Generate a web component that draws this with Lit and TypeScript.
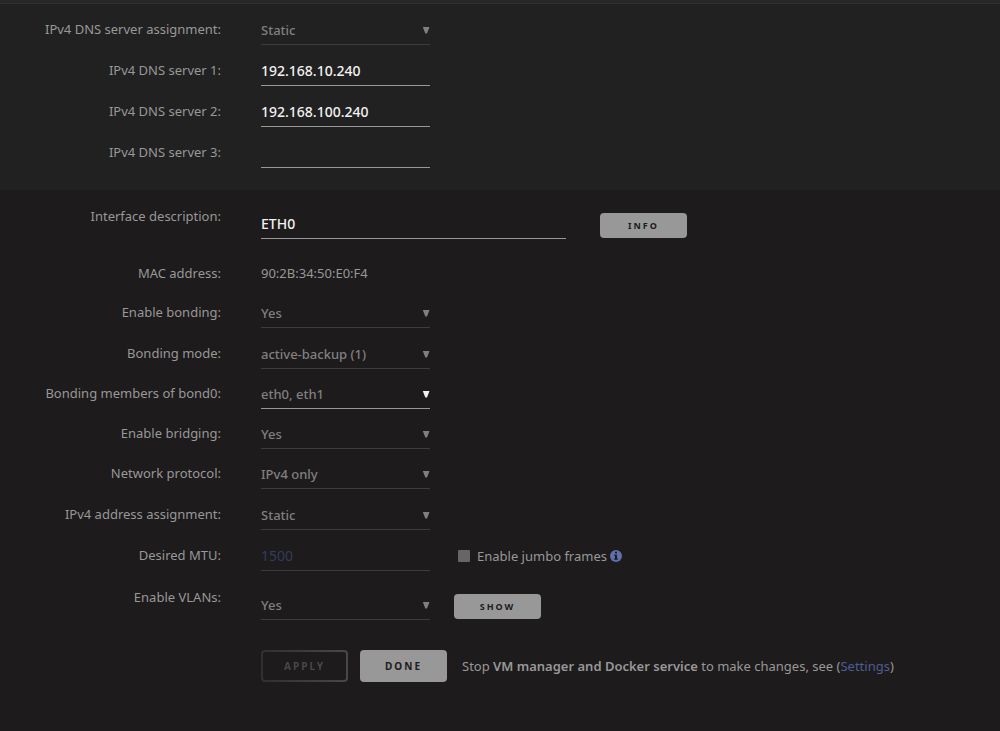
import { LitElement, html, css, svg, nothing } from "lit";
import { customElement } from "lit/decorators.js";

@customElement("app-root")
export class AppRoot extends LitElement {
  static styles = css`
    :host {
      display: flex;
      flex-direction: column;
      min-height: 100vh;
      background: #1d1b1c;
      color: #989898;
      font: 13px/20px "Noto Sans", sans-serif;
    }
    * {
      box-sizing: border-box;
    }
    .strip {
      height: 4px;
      background: #272727;
      border-bottom: 1px solid #303030;
    }
    .dns {
      background: #212121;
      padding-bottom: 22px;
    }
    .row {
      display: grid;
      grid-template-columns: 221px minmax(0, 1fr);
      column-gap: 40px;
      align-items: end;
      height: 41px;
    }
    .snug {
      height: 40px;
    }
    .tall {
      height: 49px;
    }
    .text {
      height: 48px;
    }
    .label {
      text-align: right;
      padding-bottom: 6px;
    }
    .tall .label {
      padding-bottom: 13px;
    }
    .text .label,
    .text .fields {
      padding-bottom: 4px;
    }
    .fields {
      display: flex;
      align-items: flex-end;
    }
    .pick {
      display: grid;
      width: 169px;
      align-items: center;
      border-bottom: 1px solid #3c3c3c;
    }
    .pick select,
    .pick svg {
      grid-area: 1 / 1;
    }
    .pick svg {
      justify-self: end;
      pointer-events: none;
      fill: #808080;
    }
    .open {
      border-color: #989898;
    }
    .open svg {
      fill: #f0f0f0;
    }
    select,
    input {
      font: inherit;
      border-radius: 0;
      outline: none;
      background: transparent;
    }
    select {
      appearance: none;
      width: 100%;
      height: 28px;
      padding: 0 0 1px;
      border: 0;
      color: #808080;
      font-weight: 500;
    }
    .box {
      width: 169px;
      height: 29px;
      padding: 0 0 2px;
      border: 0;
      border-bottom: 1px solid #989898;
      color: #f2f2f2;
      font-size: 14px;
      font-weight: 500;
    }
    .wide {
      width: 305px;
    }
    .dim {
      border-color: #3c3c3c;
    }
    .box::placeholder {
      color: #333c5c;
      opacity: 1;
      font-weight: 400;
    }
    button {
      height: 25px;
      width: 87px;
      margin: 0 0 1px 24px;
      padding: 0;
      border: 0;
      border-radius: 4px;
      background: #989898;
      color: #1d1b1c;
      font: 700 9px/12px "Noto Sans", sans-serif;
      letter-spacing: 2px;
    }
    .wide + button {
      margin-left: 34px;
    }
    .jumbo {
      display: flex;
      align-items: center;
      margin-left: 28px;
      padding-bottom: 5px;
    }
    .jumbo input {
      appearance: none;
      width: 12px;
      height: 12px;
      margin: 0 7px 0 0;
      border-radius: 1px;
      background: #666666;
    }
    .jumbo svg {
      margin-left: 3px;
    }
    .actions {
      display: flex;
      align-items: center;
      flex-wrap: wrap;
      margin: 30px 0 0 261px;
    }
    .actions button {
      height: 32px;
      margin: 0 15px 0 0;
      font-size: 10px;
    }
    .actions .apply {
      margin-right: 12px;
      border: 2px solid transparent;
      color: #484848;
      background:
        linear-gradient(#1d1b1c, #1d1b1c) padding-box,
        linear-gradient(90deg, #303030, #484848) border-box;
    }
    b {
      font-weight: 600;
    }
    a {
      color: #4f5d94;
      text-decoration: none;
    }
  `;

  private pick(id: string, value: string, open = false) {
    return html`<div class="pick ${open ? "open" : ""}">
      <select id=${id}>
        <option>${value}</option>
      </select>
      <svg width="8" height="8" viewBox="0 0 8 8" aria-hidden="true">
        ${svg`<path d="M.8 1h6.700L5 7.500H3.300z"/>`}
      </svg>
    </div>`;
  }

  private row(id: string, label: string, fields: unknown, kind = "") {
    return html`<div class="row ${kind}">
      <label class="label" for=${id}>${label}</label>
      <div class="fields">${fields}</div>
    </div>`;
  }

  private box(id: string, value: string, kind = "", hint = "") {
    return html`<input
      class="box ${kind}"
      id=${id}
      type="text"
      .value=${value}
      placeholder=${hint || nothing}
    />`;
  }

  render() {
    return html`
      <div class="strip"></div>
      <section class="dns">
        ${this.row("dns", "IPv4 DNS server assignment:", this.pick("dns", "Static"))}
        ${this.row("dns1", "IPv4 DNS server 1:", this.box("dns1", "192.168.10.240"))}
        ${this.row("dns2", "IPv4 DNS server 2:", this.box("dns2", "192.168.100.240"))}
        ${this.row("dns3", "IPv4 DNS server 3:", this.box("dns3", ""))}
      </section>
      <section>
        ${this.row(
          "desc",
          "Interface description:",
          html`${this.box("desc", "ETH0", "wide")}<button type="button">INFO</button>`,
          "tall"
        )}
        <div class="row text">
          <span class="label">MAC address:</span>
          <div class="fields">90:2B:34:50:E0:F4</div>
        </div>
        ${this.row("bonding", "Enable bonding:", this.pick("bonding", "Yes"))}
        ${this.row("mode", "Bonding mode:", this.pick("mode", "active-backup (1)"))}
        ${this.row("members", "Bonding members of bond0:", this.pick("members", "eth0, eth1", true), "snug")}
        ${this.row("bridging", "Enable bridging:", this.pick("bridging", "Yes"), "snug")}
        ${this.row("protocol", "Network protocol:", this.pick("protocol", "IPv4 only"), "snug")}
        ${this.row("address", "IPv4 address assignment:", this.pick("address", "Static"))}
        ${this.row(
          "mtu",
          "Desired MTU:",
          html`${this.box("mtu", "", "dim", "1500")}
            <label class="jumbo">
              <input type="checkbox" />Enable jumbo frames
              <svg width="12" height="12" viewBox="0 0 12 12" aria-hidden="true">
                <circle cx="6" cy="6" r="6" fill="#5f6fae" />
                <path fill="#1d1b1c" d="M5 1.8h2v1.7H5zM4.2 4.7H7v3.8h.8v1.2H4.2V8.500H5V5.900h-.8z" />
              </svg>
            </label>`
        )}
        ${this.row(
          "vlans",
          "Enable VLANs:",
          html`${this.pick("vlans", "Yes")}<button type="button">SHOW</button>`,
          "tall"
        )}
        <div class="actions">
          <button class="apply" type="button" disabled>APPLY</button>
          <button type="button">DONE</button>
          <span>
            Stop <b>VM manager and Docker service</b> to make changes, see (<a href="#settings">Settings</a>)
          </span>
        </div>
      </section>
    `;
  }
}
